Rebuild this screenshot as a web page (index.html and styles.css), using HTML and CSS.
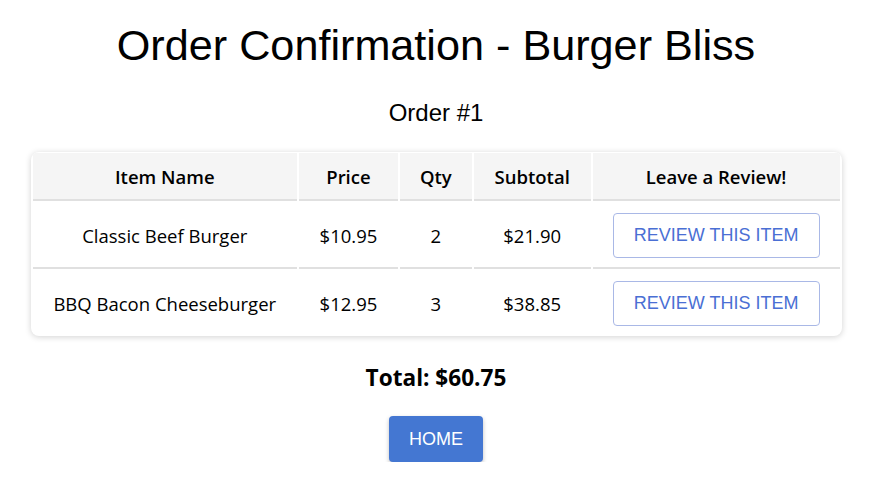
FILE: index.html
```html
<!DOCTYPE html>
<html>
<head>
<meta charset="utf-8">
<link rel="stylesheet" href="styles.css">
</head>
<body>
<div class="page">
  <h1 class="title">Order Confirmation - Burger Bliss</h1>
  <h2 class="order-no">Order #1</h2>
  <div class="card">
    <table class="items">
      <thead>
        <tr>
          <th class="c-name">Item Name</th>
          <th class="c-price">Price</th>
          <th class="c-qty">Qty</th>
          <th class="c-sub">Subtotal</th>
          <th class="c-rev">Leave a Review!</th>
        </tr>
      </thead>
      <tbody>
        <tr>
          <td>Classic Beef Burger</td>
          <td>$10.95</td>
          <td>2</td>
          <td>$21.90</td>
          <td><button class="btn-outline">REVIEW THIS ITEM</button></td>
        </tr>
        <tr>
          <td>BBQ Bacon Cheeseburger</td>
          <td>$12.95</td>
          <td>3</td>
          <td>$38.85</td>
          <td><button class="btn-outline">REVIEW THIS ITEM</button></td>
        </tr>
      </tbody>
    </table>
  </div>
  <p class="total">Total: $60.75</p>
  <button class="btn-home">HOME</button>
</div>
</body>
</html>
```
FILE: styles.css
```css
body {
  margin: 8px;
  font-family: "Liberation Sans", Arial, sans-serif;
  color: #000;
  background: #fff;
}
.page {
  display: flex;
  flex-direction: column;
  align-items: center;
}
.title {
  font-size: 43.2px;
  font-weight: normal;
  margin: 13px 0 0;
  line-height: 48px;
}
.order-no {
  font-size: 24px;
  font-weight: normal;
  margin: 30px 0 0;
  line-height: 28px;
}
.card {
  width: 811px;
  margin-top: 25px;
  border-radius: 8px;
  box-shadow: 0 1px 6px rgba(0, 0, 0, 0.18);
  overflow: hidden;
  background: #fff;
}
.items {
  width: 100%;
  border-spacing: 2px 0;
  font-family: "Open Sans", "Noto Sans", sans-serif;
  font-size: 18.5px;
  text-align: center;
  padding: 1px 0;
}
.items th {
  background: #f5f5f5;
  font-weight: 600;
  height: 45px;
  padding: 1px 0 0;
  border-bottom: 2px solid #e0e0e0;
}
.items td {
  height: 63px;
  padding: 3px 0 0;
  border-bottom: 2px solid #e0e0e0;
}
.items tbody tr:last-child td {
  border-bottom: none;
}
.c-name { width: 265px; }
.c-price { width: 99px; }
.c-qty { width: 72px; }
.c-sub { width: 117px; }
.c-rev { width: 247px; }
.btn-outline {
  display: block;
  margin: 0 auto;
  font-family: "Liberation Sans", Arial, sans-serif;
  font-size: 18px;
  color: #4a6fd4;
  background: #fff;
  border: 1px solid #a9b8e6;
  border-radius: 4px;
  width: 207px;
  height: 45px;
  cursor: pointer;
}
.total {
  font-family: "Open Sans", "Noto Sans", sans-serif;
  font-weight: bold;
  font-size: 22.6px;
  margin: 27px 0 0;
  line-height: 30px;
}
.btn-home {
  margin-top: 23px;
  font-family: "Liberation Sans", Arial, sans-serif;
  font-size: 18px;
  color: #fff;
  background: #4477d2;
  border: none;
  border-radius: 4px;
  width: 94px;
  height: 46px;
  box-shadow: 0 2px 4px rgba(0, 0, 0, 0.25);
}
```
